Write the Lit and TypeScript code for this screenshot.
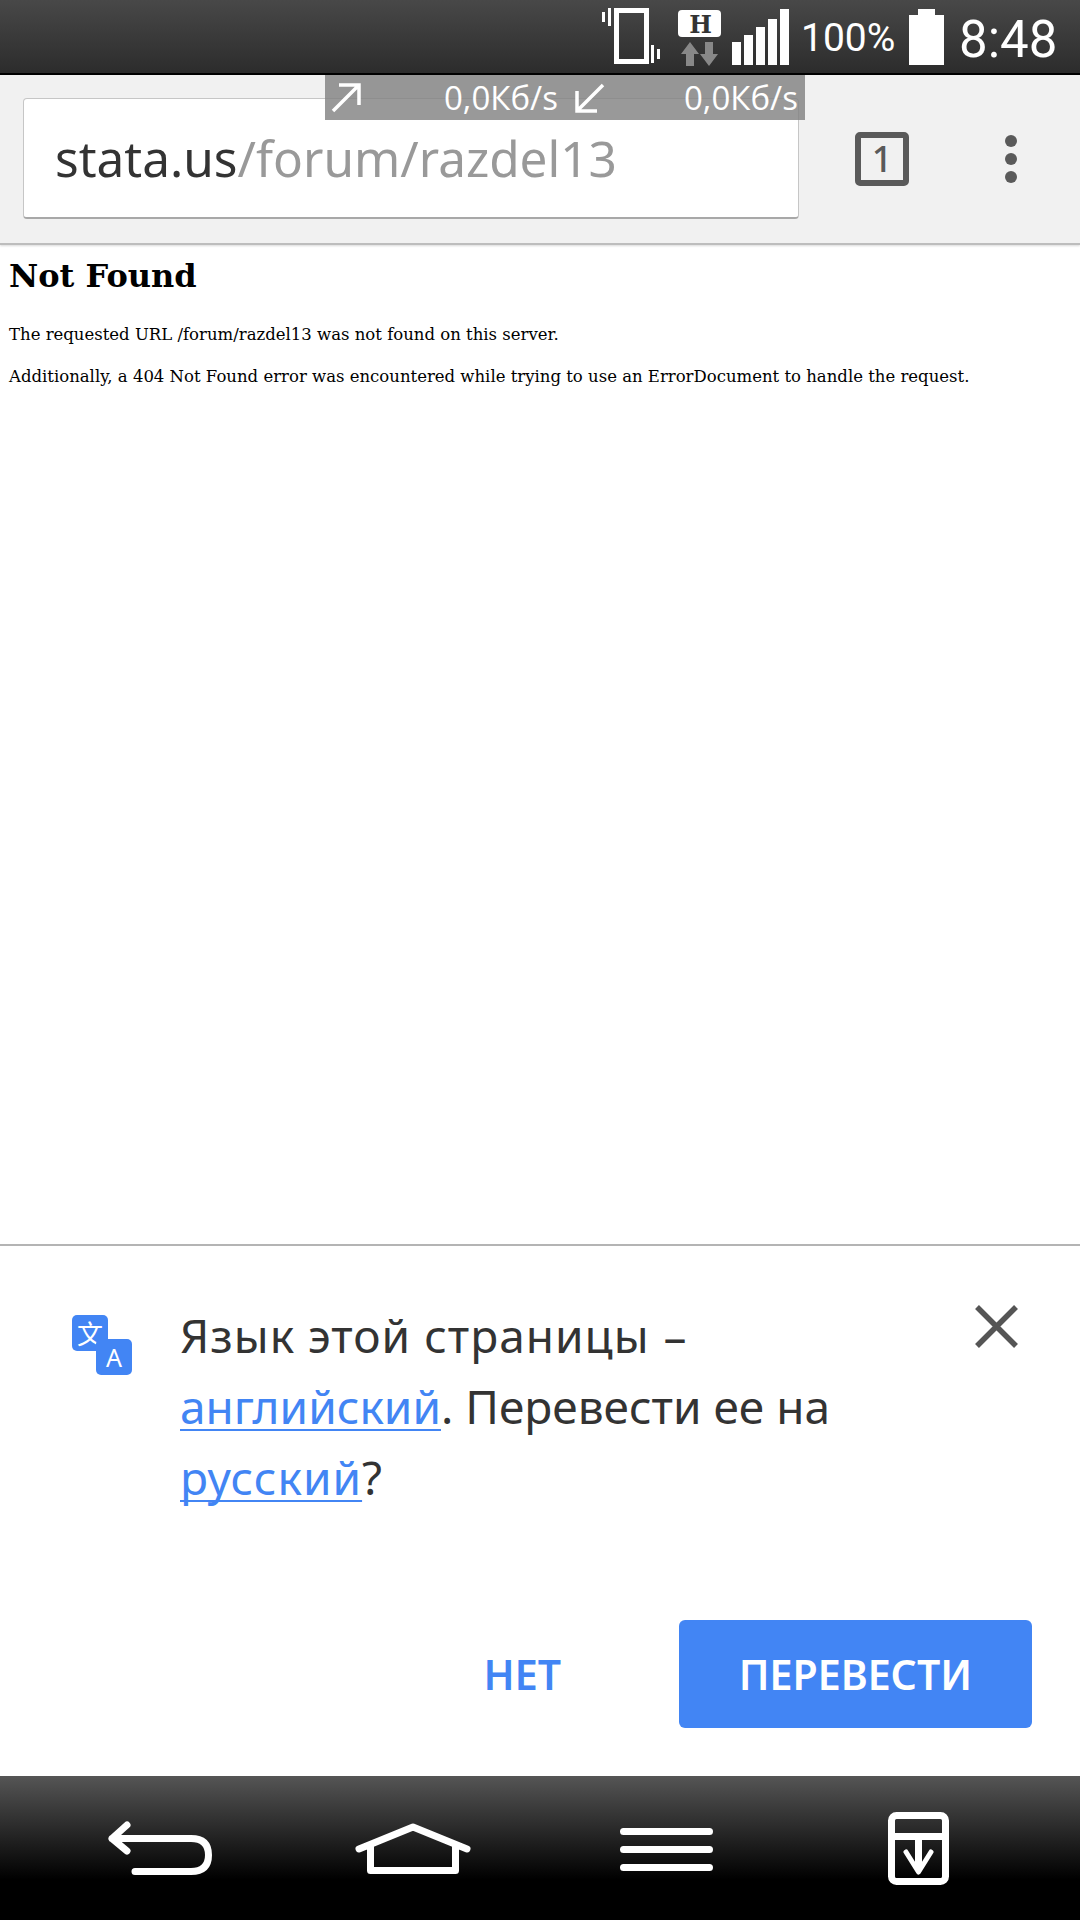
import { LitElement, html, css } from "lit";
import { customElement } from "lit/decorators.js";

@customElement("app-root")
export class AppRoot extends LitElement {
  static styles = css`
    :host { display: flex; flex-direction: column; width: 1080px; height: 1920px; position: relative; overflow: hidden; background: #fff; font-family: "Noto Sans", sans-serif; }
    svg { display: block; flex: none; }
    .status { height: 75px; box-sizing: border-box; border-bottom: 2px solid #000; background: linear-gradient(#484848, #2c2c2c); display: flex; align-items: flex-start; flex: none; color: #fff; font-family: Roboto, sans-serif; padding-left: 600px; }
    .net { margin-left: 12px; }
    .bars { margin-left: 6px; }
    .pct { font-size: 39px; line-height: 76px; margin-left: 11px; width: 108px; height: 73px; }
    .time { font-size: 51px; line-height: 80px; margin-left: 15px; }
    .toolbar { height: 170px; box-sizing: border-box; background: #f1f1f1; border-bottom: 2px solid #bdbdbd; box-shadow: 0 1px 2px rgba(0,0,0,.15); flex: none; display: flex; align-items: flex-start; padding: 23px 0 0 23px; }
    .url { width: 776px; height: 121px; box-sizing: border-box; background: #fff; border: 1px solid #c6c6c6; border-bottom: 2px solid #a8a8a8; border-radius: 4px; font-size: 49.5px; line-height: 118px; padding-left: 31px; color: #333; white-space: nowrap; }
    .url span { color: #999; }
    .tab { margin: 34px 0 0 56px; width: 54px; height: 54px; box-sizing: border-box; border: 6px solid #5a5a5a; border-radius: 5px; color: #5a5a5a; font-size: 36px; font-weight: 500; line-height: 41px; text-align: center; }
    .dots { margin: 37px 0 0 96px; display: flex; flex-direction: column; gap: 6px; }
    .dots i { width: 12px; height: 12px; border-radius: 50%; background: #5a5a5a; }
    .speed { position: absolute; left: 325px; top: 75px; width: 480px; height: 45px; background: rgba(128,128,128,.8); color: #fff; font-size: 33px; line-height: 44px; display: flex; align-items: center; padding-left: 6px; box-sizing: border-box; font-family: "Open Sans", sans-serif; }
    .v1 { margin-left: 83px; width: 131px; }
    .v2 { margin-left: 79px; }
    .page { flex: 1; font-family: "DejaVu Serif", serif; color: #000; padding: 8px 9px 0; }
    h1 { font-size: 32px; line-height: 46px; margin: 0 0 24px; font-weight: 700; }
    p { font-size: 16.5px; line-height: 24px; margin: 0 0 18px; white-space: nowrap; }
    .infobar { height: 532px; flex: none; box-sizing: border-box; border-top: 2px solid #b4b4b4; display: flex; flex-direction: column; padding: 69px 48px 48px 72px; }
    .msg { display: flex; align-items: flex-start; }
    .badge { position: relative; width: 60px; height: 60px; flex: none; color: #fff; }
    .badge span { position: absolute; width: 36px; height: 36px; border-radius: 5px; background: #4285f4; display: flex; align-items: center; justify-content: center; line-height: 36px; }
    .zh { left: 0; top: 0; font-size: 26px; font-family: "Noto Sans CJK SC", sans-serif; }
    .en { left: 24px; top: 24px; font-size: 25px; }
    .txt { margin-left: 48px; width: 690px; font-size: 46px; line-height: 71px; color: #333; margin-top: -15px; flex: none; }
    .txt a { color: #4285f4; text-decoration: underline; text-decoration-thickness: 2px; text-underline-offset: 5px; text-decoration-skip-ink: none; }
    .wide { letter-spacing: 1px; }
    .dash { margin-left: 2px; }
    .close { margin-left: 105px; margin-top: -10px; }
    .actions { margin-top: auto; display: flex; justify-content: flex-end; align-items: center; }
    .no { font-size: 41px; font-weight: 600; color: #4285f4; margin-right: 118px; }
    .yes { width: 353px; height: 108px; border-radius: 6px; background: #4285f4; color: #fff; font-size: 41px; font-weight: 600; display: flex; align-items: center; justify-content: center; }
    .nav { height: 144px; flex: none; background: linear-gradient(#555 0, #000 72%); display: grid; grid-template-columns: repeat(4, 253px); padding-left: 33px; align-items: start; justify-items: center; }
    .nav div { padding-top: 44px; }
    .nav div.doc { padding-top: 32px; }
  `;

  render() {
    return html`
      <div class="status">
        <svg width="64" height="73" viewBox="0 0 64 73" fill="#fff">
          <rect x="16.500" y="10.500" width="30" height="51" fill="none" stroke="#fff" stroke-width="5"/>
          <rect x="2" y="12" width="3" height="10"/><rect x="8" y="8" width="3" height="18"/>
          <rect x="51" y="45" width="3" height="18"/><rect x="57" y="49" width="3" height="10"/>
        </svg>
        <svg class="net" width="48" height="73" viewBox="676 0 48 73">
          <rect x="678" y="10" width="43" height="27" rx="4" fill="#fff"/>
          <text x="700.500" y="33" text-anchor="middle" font-size="24" font-weight="700" fill="#333" font-family="DejaVu Serif, serif">H</text>
          <path d="M690 42 699 54H694V66H686V54H681Z M709 66 718 54H713V42H705V54H700Z" fill="#888"/>
        </svg>
        <svg class="bars" width="60" height="73" viewBox="730 0 60 73" fill="#fff">
          <rect x="732" y="42" width="9" height="23"/><rect x="744" y="35" width="9" height="30"/><rect x="756" y="27" width="9" height="38"/><rect x="768" y="19" width="9" height="46"/><rect x="780" y="9" width="9" height="56"/>
        </svg>
        <div class="pct">100%</div>
        <svg width="35" height="73" viewBox="909 0 35 73" fill="#fff"><path d="M909 15H918V9H935V15H944V65H909Z"/></svg>
        <div class="time">8:48</div>
      </div>
      <div class="toolbar">
        <div class="url">stata.us<span>/forum/razdel13</span></div>
        <div class="tab">1</div>
        <div class="dots"><i></i><i></i><i></i></div>
      </div>
      <div class="speed">
        <svg width="30" height="30" viewBox="0 0 30 30" fill="none" stroke="#fff" stroke-width="3.5"><path d="M2 28 28 2M8 2h20v20"/></svg>
        <span class="v1">0,0Кб/s</span>
        <svg width="30" height="30" viewBox="0 0 30 30" fill="none" stroke="#fff" stroke-width="3.5"><path d="M28 2 2 28M2 8v20h20"/></svg>
        <span class="v2">0,0Кб/s</span>
      </div>
      <div class="page">
        <h1>Not Found</h1>
        <p>The requested URL /forum/razdel13 was not found on this server.</p>
        <p>Additionally, a 404 Not Found error was encountered while trying to use an ErrorDocument to handle the request.</p>
      </div>
      <div class="infobar">
        <div class="msg">
          <div class="badge"><span class="zh">文</span><span class="en">A</span></div>
          <div class="txt"><span class="wide">Язык этой страницы</span> <span class="dash">–</span> <a>английский</a>. Перевести ее на <a class="wide">русский</a>?</div>
          <svg class="close" width="43" height="43" viewBox="0 0 43 43" stroke="#555" stroke-width="5.5"><path d="M2 2 41 41M41 2 2 41"/></svg>
        </div>
        <div class="actions">
          <div class="no">НЕТ</div>
          <div class="yes">ПЕРЕВЕСТИ</div>
        </div>
      </div>
      <div class="nav">
        <div><svg width="112" height="60" viewBox="105 1820 112 60" fill="none" stroke="#fff" stroke-width="7" stroke-linecap="round" stroke-linejoin="round"><path d="M128 1825 113 1838.500 128 1851M113 1838.500H192Q209.500 1838.500 209.500 1855T192 1871.500H136"/></svg></div>
        <div><svg width="120" height="60" viewBox="353 1820 120 60" fill="none" stroke="#fff" stroke-width="7" stroke-linecap="round" stroke-linejoin="round"><path d="M359 1849 413 1827 467 1849M370.500 1846V1870.500H455.500V1846"/></svg></div>
        <div><svg width="100" height="60" viewBox="616 1820 100 60" fill="none" stroke="#fff" stroke-width="7" stroke-linecap="round"><path d="M623.500 1831.500H709.500M623.500 1849.500H709.500M623.500 1867.500H709.500"/></svg></div>
        <div class="doc"><svg width="70" height="80" viewBox="884 1808 70 80" fill="none" stroke="#fff" stroke-width="7"><rect x="891.500" y="1815.500" width="54" height="66" rx="5"/><path d="M892 1836.500H945M918.500 1838V1868"/><path d="M906 1852 918.500 1872 931 1852" stroke-width="5" stroke-linecap="round" stroke-linejoin="round"/></svg></div>
      </div>
    `;
  }
}
